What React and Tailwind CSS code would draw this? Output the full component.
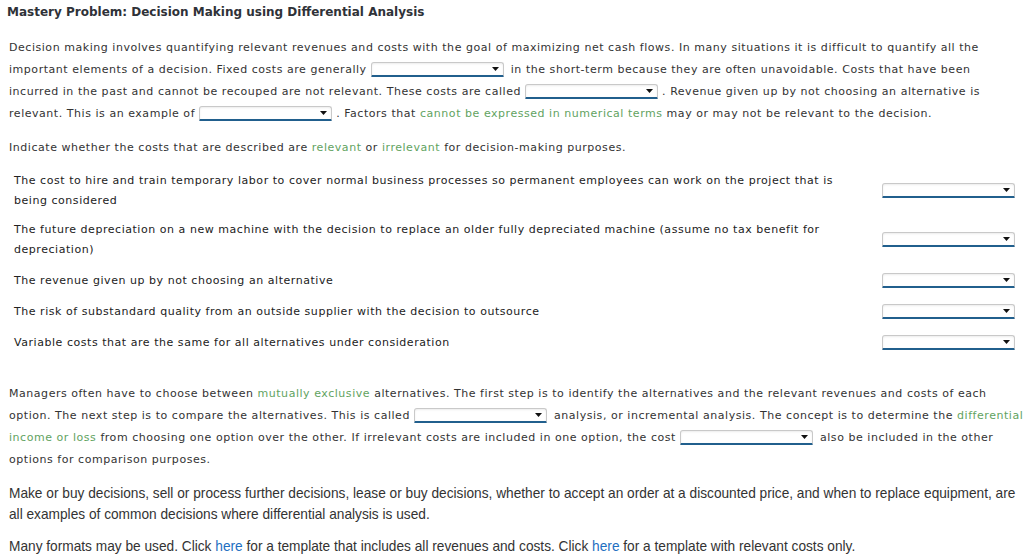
import React from "react";

const Dropdown = () => (
  <span className="inline-block relative align-middle w-[133px] h-[15px] bg-white border border-[#c9c9c9] border-b-2 border-b-[#215f8d] rounded-t-[3px] rounded-b-[1px] shadow-[inset_0_1px_2px_rgba(0,0,0,0.08)] -mt-[2px]">
    <svg className="absolute right-[4px] top-[4px]" width="7" height="4" viewBox="0 0 7 4">
      <path d="M0 0h7L3.5 4z" fill="#111" />
    </svg>
  </span>
);

const G = ({ children }) => <span className="text-[#62a35f]">{children}</span>;
const Link = ({ children }) => <span className="text-[#1f6fc1]">{children}</span>;

const rows = [
  ["The cost to hire and train temporary labor to cover normal business processes so permanent employees can work on the project that is", "being considered"],
  ["The future depreciation on a new machine with the decision to replace an older fully depreciated machine (assume no tax benefit for", "depreciation)"],
  ["The revenue given up by not choosing an alternative"],
  ["The risk of substandard quality from an outside supplier with the decision to outsource"],
  ["Variable costs that are the same for all alternatives under consideration"],
];

export default function App() {
  return (
    <div className="w-[1028px] h-[558px] overflow-hidden bg-white text-[#333] text-[11px] tracking-[0.54px] font-['DejaVu_Sans',Verdana,sans-serif] pl-[9px]">
      {/* Title */}
      <div className="pt-[4px] leading-[16px] font-bold text-[12px] tracking-normal -ml-[2px] text-[#2f3238]">
        Mastery Problem: Decision Making using Differential Analysis
      </div>

      {/* Intro */}
      <div className="mt-[17px] leading-[22px] whitespace-nowrap">
        <div>Decision making involves quantifying relevant revenues and costs with the goal of maximizing net cash flows. In many situations it is difficult to quantify all the</div>
        <div>
          important elements of a decision. Fixed costs are generally <Dropdown /> <span className="ml-[3px]">in the short-term because they are often unavoidable. Costs that have been</span>
        </div>
        <div>
          incurred in the past and cannot be recouped are not relevant. These costs are called <Dropdown /> . Revenue given up by not choosing an alternative is
        </div>
        <div>
          relevant. This is an example of <Dropdown /> . Factors that <G>cannot be expressed in numerical terms</G> may or may not be relevant to the decision.
        </div>
      </div>

      <div className="mt-[12px] leading-[22px] whitespace-nowrap">
        Indicate whether the costs that are described are <G>relevant</G> or <G>irrelevant</G> for decision-making purposes.
      </div>

      {/* Rows */}
      <div className="mt-[12px] ml-[5px] w-[1001px] flex flex-col text-[#222]">
        {rows.map((r, i) => (
          <div
            key={i}
            className={`flex items-center justify-between leading-[20px] ${i === 0 ? "mb-[9px]" : "mb-[11px]"}`}
          >
            <div className="w-[850px] whitespace-nowrap">
              {r.map((l, j) => (
                <div key={j}>{l}</div>
              ))}
            </div>
            <Dropdown />
          </div>
        ))}
      </div>

      {/* Differential analysis */}
      <div className="mt-[19px] leading-[22px] whitespace-nowrap">
        <div>
          Managers often have to choose between <G>mutually exclusive</G> alternatives. The first step is to identify the alternatives and the relevant revenues and costs of each
        </div>
        <div>
          option. The next step is to compare the alternatives. This is called <Dropdown /> <span className="ml-[3px]">analysis, or incremental analysis. The concept is to determine the</span> <G>differential</G>
        </div>
        <div>
          <G>income or loss</G> from choosing one option over the other. If irrelevant costs are included in one option, the cost <Dropdown /> <span className="ml-[3px]">also be included in the other</span>
        </div>
        <div>options for comparison purposes.</div>
      </div>

      <div className="mt-[11px] leading-[21px] whitespace-nowrap text-[15px] tracking-normal font-['Liberation_Sans',Arial,sans-serif] text-[#333] scale-x-[0.913] origin-left">
        <div>Make or buy decisions, sell or process further decisions, lease or buy decisions, whether to accept an order at a discounted price, and when to replace equipment, are</div>
        <div>all examples of common decisions where differential analysis is used.</div>
      </div>

      <div className="mt-[11px] leading-[21px] whitespace-nowrap text-[15px] tracking-normal font-['Liberation_Sans',Arial,sans-serif] text-[#333] scale-x-[0.913] origin-left">
        Many formats may be used. Click <Link>here</Link> for a template that includes all revenues and costs. Click <Link>here</Link> for a template with relevant costs only.
      </div>
    </div>
  );
}
